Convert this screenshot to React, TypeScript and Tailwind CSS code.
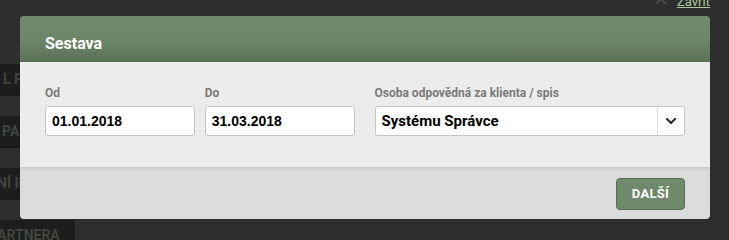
import React from 'react';
import { X, ChevronDown } from 'lucide-react';

const menuRows = [
  { label: 'L PLÁNU', offset: 'ml-[3px]', width: 'w-[120px]' },
  { label: 'PARTNEŘI', offset: 'ml-[2px]', width: 'w-[120px]' },
  { label: 'NÍ INFORMACE', offset: '-ml-[3px]', width: 'w-[120px]' },
  { label: 'ARTNERA', offset: '-ml-[3px]', width: 'w-[75px]' },
];

export default function App() {
  return (
    <div className="relative w-[729px] h-[240px] overflow-hidden bg-[#2e2e2e] font-['Roboto',sans-serif]">
      {/* background menu, mostly covered by the modal */}
      <div className="flex flex-col gap-[20px] pt-[64px]">
        {menuRows.map((row) => (
          <div
            key={row.label}
            className={`${row.width} h-[32px] shrink-0 flex items-center overflow-hidden bg-[#1b1e1b] border-b border-[#151715]`}
          >
            <span className={`${row.offset} whitespace-nowrap text-[14px] font-bold text-[#41443f]`}>{row.label}</span>
          </div>
        ))}
      </div>

      {/* close link */}
      <div className="absolute right-[19px] top-[-8px] flex items-center gap-[8px]">
        <X className="h-[16px] w-[16px] text-[#4d4d4d] -mt-[6px]" strokeWidth={3} />
        <span className="text-[13px] text-[#a9c79a] underline">Zavřít</span>
      </div>

      {/* modal */}
      <div className="absolute left-[20px] top-[16px] w-[690px] rounded-[4px] overflow-hidden flex flex-col">
        <div className="h-[46px] flex items-center px-[25px] bg-gradient-to-b from-[#6e8a6a] via-[#6d8869] to-[#5b7057]">
          <h2 className="text-[16px] font-bold text-white mt-[10px]">Sestava</h2>
        </div>
        <div className="h-[105px] bg-[#ececec] px-[25px] pt-[24px] flex gap-[10px]">
          <div className="flex flex-col w-[150px]">
            <label className="text-[12px] font-bold text-[#7a7a7a] leading-[14px] mb-[6px]">Od</label>
            <div className="h-[30px] rounded-[3px] border border-[#c4c4c4] bg-white flex items-center px-[6px] text-[14px] font-bold text-black font-['Liberation_Sans',sans-serif]">
              01.01.2018
            </div>
          </div>
          <div className="flex flex-col w-[150px]">
            <label className="text-[12px] font-bold text-[#7a7a7a] leading-[14px] mb-[6px]">Do</label>
            <div className="h-[30px] rounded-[3px] border border-[#c4c4c4] bg-white flex items-center px-[6px] text-[14px] font-bold text-black font-['Liberation_Sans',sans-serif]">
              31.03.2018
            </div>
          </div>
          <div className="flex flex-col w-[311px] ml-[10px]">
            <label className="text-[12px] font-bold text-[#7a7a7a] leading-[14px] mb-[6px]">Osoba odpovědná za klienta / spis</label>
            <div className="h-[30px] rounded-[3px] border border-[#c4c4c4] bg-white flex items-stretch">
              <div className="flex-1 flex items-center px-[6px] text-[15px] font-bold text-black">Systému Správce</div>
              <div className="w-[27px] border-l border-[#dcdcdc] flex items-center justify-center">
                <ChevronDown className="h-[16px] w-[16px] text-[#333]" strokeWidth={3.5} />
              </div>
            </div>
          </div>
        </div>
        <div className="h-[52px] bg-[#dcdcdc] shadow-[inset_0_3px_3px_-1px_rgba(0,0,0,0.08)] flex items-center justify-end px-[25px] pt-[2px]">
          <button className="h-[32px] w-[69px] rounded-[4px] border border-[#58704f] bg-[#6e8a6a] text-white text-[13px] font-bold tracking-[0.3px]">
            DALŠÍ
          </button>
        </div>
      </div>
    </div>
  );
}
